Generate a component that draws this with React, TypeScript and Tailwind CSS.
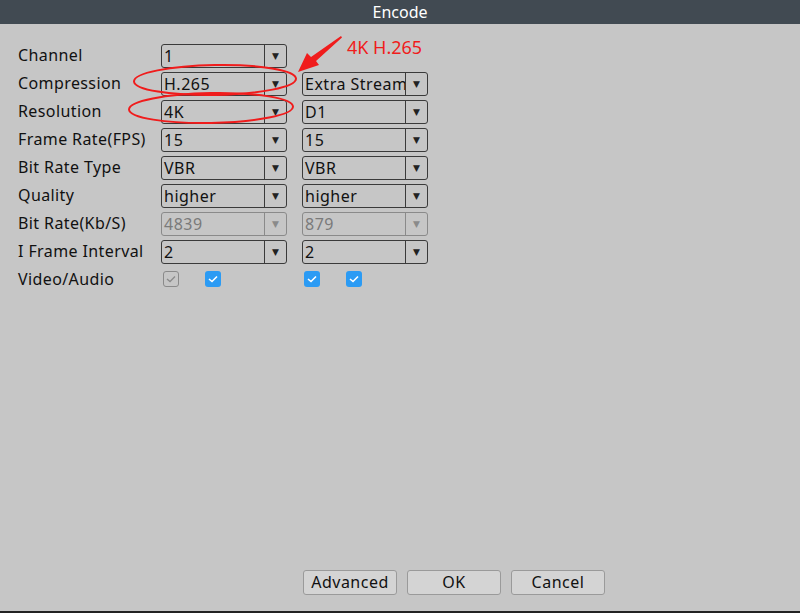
import React from 'react';

type Field = {
  label: string;
  main: string;
  sub: string;
  disabled?: boolean;
};

const fields: Field[] = [
  { label: 'Channel', main: '1', sub: '' },
  { label: 'Compression', main: 'H.265', sub: 'Extra Stream' },
  { label: 'Resolution', main: '4K', sub: 'D1' },
  { label: 'Frame Rate(FPS)', main: '15', sub: '15' },
  { label: 'Bit Rate Type', main: 'VBR', sub: 'VBR' },
  { label: 'Quality', main: 'higher', sub: 'higher' },
  { label: 'Bit Rate(Kb/S)', main: '4839', sub: '879', disabled: true },
  { label: 'I Frame Interval', main: '2', sub: '2' },
];

function Select({ value, disabled }: { value: string; disabled?: boolean }) {
  return (
    <div
      className={`flex h-[24px] w-[126px] items-stretch overflow-hidden rounded-[3px] border ${
        disabled ? 'border-[#8a8a8a] text-[#7a7a7a]' : 'border-[#3a3a3a] text-[#111]'
      }`}
    >
      <div className="flex-1 overflow-hidden whitespace-nowrap pl-[2px] text-[16px] leading-[22px] tracking-[0.5px]">
        {value}
      </div>
      <div
        className={`flex w-[22px] items-center justify-center border-l text-[9px] ${
          disabled ? 'border-[#8a8a8a] text-[#8a8a8a]' : 'border-[#3a3a3a] text-[#222]'
        }`}
      >
        ▼
      </div>
    </div>
  );
}

function Check({ disabled }: { disabled?: boolean }) {
  if (disabled) {
    return (
      <div className="flex h-[16px] w-[16px] items-center justify-center rounded-[3px] border border-[#8a8a8a]">
        <svg width="10" height="8" viewBox="0 0 10 8">
          <path d="M1 4 L4 6.5 L9 1.5" fill="none" stroke="#8a8a8a" strokeWidth="1.3" />
        </svg>
      </div>
    );
  }
  return (
    <div className="flex h-[16px] w-[16px] items-center justify-center rounded-[3px] bg-[#2b9bf4]">
      <svg width="10" height="8" viewBox="0 0 10 8">
        <path d="M1 4 L4 6.5 L9 1.5" fill="none" stroke="#fff" strokeWidth="1.6" />
      </svg>
    </div>
  );
}

function Button({ children }: { children: React.ReactNode }) {
  return (
    <button className="h-[25px] w-[94px] rounded-[3px] border border-[#9a9a9a] bg-[#d4d4d4] text-[16px] leading-[23px] tracking-[0.5px] text-[#111]">
      {children}
    </button>
  );
}

export default function App() {
  return (
    <div
      className="relative flex h-[613px] w-[800px] flex-col bg-[#c6c6c6]"
      style={{ fontFamily: '"Noto Sans", "DejaVu Sans", sans-serif' }}
    >
      <div className="flex h-[24px] items-center justify-center bg-[#414a52] text-[16px] text-white">
        Encode
      </div>

      <div className="flex flex-1 flex-col pl-[18px] pt-[20px]">
        {fields.map((f) => (
          <div key={f.label} className="flex h-[28px] items-start">
            <div className="w-[143px] text-[16px] leading-[22px] tracking-[0.4px] text-[#111]">{f.label}</div>
            <Select value={f.main} disabled={f.disabled} />
            {f.label !== 'Channel' && (
              <div className="ml-[15px]">
                <Select value={f.sub} disabled={f.disabled} />
              </div>
            )}
          </div>
        ))}
        <div className="flex h-[28px] items-start">
          <div className="w-[145px] text-[16px] leading-[22px] tracking-[0.4px] text-[#111]">Video/Audio</div>
          <div className="mt-[3px] flex">
            <Check disabled />
            <div className="ml-[26px]">
              <Check />
            </div>
            <div className="ml-[83px]">
              <Check />
            </div>
            <div className="ml-[26px]">
              <Check />
            </div>
          </div>
        </div>
      </div>

      <div className="flex justify-center gap-[10px] pb-[16px] pl-[108px]">
        <Button>Advanced</Button>
        <Button>OK</Button>
        <Button>Cancel</Button>
      </div>
      <div className="h-[2px] bg-[#222]" />

      {/* red annotation */}
      <svg className="pointer-events-none absolute left-0 top-0" width="800" height="613">
        <ellipse cx="215" cy="80" rx="81" ry="15" fill="none" stroke="#f01c1c" strokeWidth="2" transform="rotate(-1 215 80)" />
        <ellipse cx="211" cy="108" rx="82" ry="15" fill="none" stroke="#f01c1c" strokeWidth="2" transform="rotate(-1 211 108)" />
        <path d="M341 36 L342 37.5 L316 61 L319 65 L298 72 L307 53 L311 57 Z" fill="#f01c1c" />
      </svg>
      <div className="absolute left-[347px] top-[36px] text-[18px] leading-[22px] text-[#f01c1c]">4K H.265</div>
    </div>
  );
}
